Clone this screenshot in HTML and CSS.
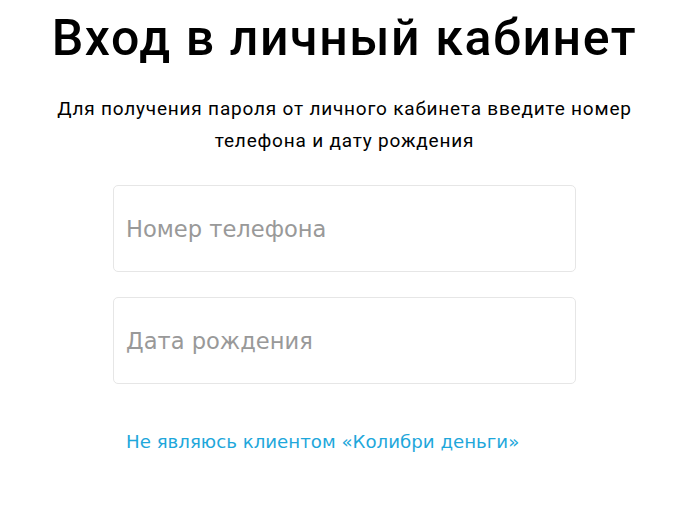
FILE: index.html
```html
<!DOCTYPE html>
<html>
<head>
    <title>Вход в личный кабинет</title>
    <link rel="stylesheet" href="styles.css">
</head>
<body>
    <div class="login">
        <h1>Вход в личный кабинет</h1>
        <p class="intro">Для получения пароля от личного кабинета введите номер телефона и дату рождения</p>
        <form class="login-form">
            <input type="text" class="field" placeholder="Номер телефона">
            <input type="text" class="field" placeholder="Дата рождения">
            <a href="#" class="link">Не являюсь клиентом «Колибри деньги»</a>
        </form>
    </div>
</body>
</html>
```

FILE: styles.css
```css
/* Basic styling */
body {
    margin: 0;
    padding: 0 10px 0 0;
    background-color: #fff;
    font-family: Roboto, "Noto Sans", sans-serif;
    color: #000;
}
.login {
    display: flex;
    flex-direction: column;
    align-items: center;
}
h1 {
    margin: 9px 0 0;
    font-size: 50px;
    font-weight: 500;
    line-height: 58px;
    letter-spacing: 1.6px;
    text-align: center;
}
.intro {
    width: 600px;
    margin: 26px 0 0;
    font-size: 19px;
    line-height: 32px;
    letter-spacing: 0.8px;
    text-align: center;
}
/* Form fields */
.login-form {
    display: flex;
    flex-direction: column;
    width: 463px;
    margin-top: 28px;
}
.field {
    box-sizing: border-box;
    height: 87px;
    margin: 0 0 25px;
    padding: 0 12px;
    border: 1px solid #e6e6e6;
    border-radius: 5px;
    font-family: "DejaVu Sans", sans-serif;
    font-size: 22.6px;
    color: #333;
    outline: none;
}
.field::placeholder {
    color: #999;
}
.link {
    margin: 22px 0 0 13px;
    font-family: "DejaVu Sans", sans-serif;
    font-size: 18.2px;
    color: #1ea7db;
    text-decoration: none;
}
```
